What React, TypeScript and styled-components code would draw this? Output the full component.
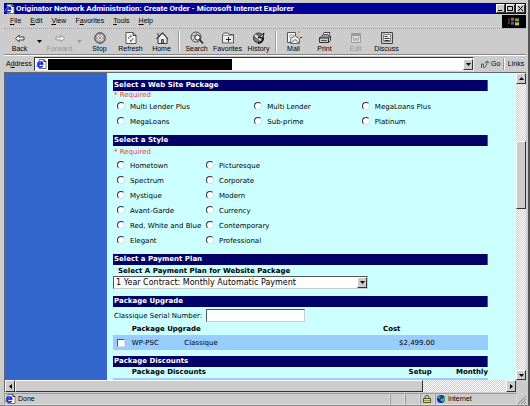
import React from 'react';
import styled, { createGlobalStyle, css } from 'styled-components';

const Global = createGlobalStyle`
  * { box-sizing: border-box; }
  body { margin: 0; background: #cccccc; }
  button, input, select { font: inherit; color: inherit; margin: 0; padding: 0; border-radius: 0; }
  button { background: none; border: 0; }
`;

const ui = '"Liberation Sans", Arial, sans-serif';
const page = '"DejaVu Sans", Verdana, sans-serif';

const raised = css`
  background: #cccccc;
  border: 1px solid;
  border-color: #ffffff #333333 #333333 #ffffff;
`;

const Window = styled.div`
  display: flex;
  flex-direction: column;
  height: 100vh;
  padding: 3px 2px 0 4px;
  background: #cccccc;
  border-right: 2px solid #555555;
  border-bottom: 1px solid #888888;
  font: 7px/10px ${ui};
  color: #000000;
`;

const TitleBar = styled.header`
  display: flex;
  flex: none;
  align-items: center;
  gap: 1px;
  height: 11px;
  padding: 0 1px 0 0;
  background: #000099;
  color: #ffffff;
`;

const Title = styled.h1`
  flex: 1;
  margin: 0;
  font: bold 8px/11px Roboto, ${ui};
  white-space: nowrap;
`;

const WindowButton = styled.button`
  ${raised}
  display: flex;
  width: 9px;
  height: 9px;
  color: #000000;
`;

const WindowButtons = styled.div`
  display: flex;
  gap: 1px;
`;

const MenuBar = styled.nav`
  display: flex;
  flex: none;
  align-items: center;
  gap: 9px;
  height: 15px;
  padding-left: 6px;
  border-bottom: 1px dotted #c08fc0;
`;

const MenuItem = styled.button`
  line-height: 10px;
`;

const Brand = styled.div`
  display: flex;
  justify-content: center;
  align-items: center;
  align-self: stretch;
  width: 24px;
  margin: 1px 0 0 auto;
  background: #000000;
`;

const ToolBar = styled.div`
  display: flex;
  flex: none;
  align-items: center;
  height: 26px;
  border-bottom: 1px solid #888888;
`;

const Tool = styled.button`
  display: flex;
  flex-direction: column;
  align-items: center;
  width: 31px;
  line-height: 8px;
  color: #000000;
  &:disabled { color: #999999; }
`;

const Drop = styled.button`
  display: flex;
  justify-content: center;
  width: 9px;
`;

const Divider = styled.div`
  align-self: stretch;
  width: 2px;
  margin: 2px 1px;
  border-left: 1px solid #999999;
  border-right: 1px solid #ffffff;
`;

const AddressBar = styled.form`
  display: flex;
  flex: none;
  align-items: center;
  height: 17px;
  padding-left: 2px;
  border-top: 1px solid #ffffff;
`;

const AddressLabel = styled.label`
  width: 28px;
`;

const AddressField = styled.div`
  display: flex;
  flex: 1;
  align-items: center;
  height: 14px;
  padding-left: 1px;
  background: #ffffff;
  border: 1px solid #eeeeee;
  border-top-color: #333333;
  border-left-color: #333333;
`;

const AddressInput = styled.input`
  width: 42%;
  height: 11px;
  margin-left: 1px;
  background: #000000;
  border: 0;
  color: #ffffff;
`;

const ArrowButton = styled.button`
  ${raised}
  display: flex;
  flex: none;
  align-items: center;
  justify-content: center;
  width: 10px;
  height: 11px;
`;

const FieldArrow = styled(ArrowButton)`
  margin-left: auto;
`;

const GoButton = styled.button`
  display: flex;
  align-items: center;
  gap: 1px;
  width: 28px;
  padding-left: 6px;
`;

const Links = styled.button`
  width: 20px;
`;

const Body = styled.div`
  display: flex;
  flex: 1;
  min-height: 0;
  border-top: 1px solid #666666;
  border-left: 1px solid #666666;
`;

const SideBar = styled.aside`
  flex: none;
  width: 102px;
  background: #3366cc;
`;

const Content = styled.main`
  flex: 1;
  min-width: 0;
  overflow: hidden;
  padding: 7px 28px 0 6px;
  background: #ccffff;
  font: 7px/10px ${page};
`;

const Heading = styled.h2`
  margin: 0;
  padding-left: 1px;
  background: #000066;
  border-right: 1px solid #336699;
  color: #ffffff;
  font: bold 7px/11px ${page};
`;

const Section = styled.section<{ $space: number }>`
  margin-bottom: ${(p) => p.$space}px;
`;

const Required = styled.p<{ $height: number }>`
  margin: 0;
  padding-left: 1px;
  color: #ff3333;
  line-height: ${(p) => p.$height}px;
`;

const Choices = styled.div<{ $columns: string }>`
  display: grid;
  grid-template-columns: ${(p) => p.$columns};
  grid-auto-rows: 15px;
  padding-left: 4px;
`;

const Choice = styled.label`
  display: flex;
  align-items: center;
  gap: 5px;
  white-space: nowrap;
`;

const Radio = styled.input`
  appearance: none;
  flex: none;
  width: 8px;
  height: 8px;
  margin-bottom: 2px;
  background: #ffffff;
  border: 1px solid #dddddd;
  border-top-color: #333333;
  border-left-color: #333333;
  border-radius: 50%;
  &:checked { background: radial-gradient(#000000 35%, #ffffff 45%); }
`;

const PlanLabel = styled.label`
  display: block;
  padding: 1px 0 0 5px;
  font-weight: bold;
`;

const SelectBox = styled.div`
  position: relative;
  width: 68%;
`;

const Select = styled.select`
  appearance: none;
  display: block;
  width: 100%;
  height: 13px;
  padding-left: 2px;
  background: #ffffff;
  border: 1px solid #cccccc;
  border-top-color: #555555;
  border-left-color: #555555;
  font: 8px/11px ${page};
`;

const SelectArrow = styled.span`
  ${raised}
  position: absolute;
  top: 1px;
  right: 1px;
  bottom: 1px;
  display: flex;
  align-items: center;
  justify-content: center;
  width: 10px;
  pointer-events: none;
`;

const SerialRow = styled.div`
  display: flex;
  align-items: center;
  gap: 4px;
  padding: 2px 0 2px 1px;
`;

const SerialInput = styled.input`
  width: 99px;
  height: 13px;
  background: #ffffff;
  border: 1px solid #cccccc;
  border-top-color: #555555;
  border-left-color: #555555;
`;

const Table = styled.table`
  width: 100%;
  border-collapse: collapse;
  table-layout: fixed;
`;

const Col = styled.col<{ $width?: string }>`
  width: ${(p) => p.$width ?? 'auto'};
`;

const Head = styled.th<{ $right?: boolean }>`
  padding: 0;
  text-align: ${(p) => (p.$right ? 'right' : 'left')};
  line-height: 11px;
`;

const Cell = styled.td<{ $indent?: number }>`
  height: 15px;
  padding: 0 0 0 ${(p) => p.$indent ?? 0}px;
  background: #99ccff;
`;

const Check = styled.input`
  appearance: none;
  display: block;
  width: 8px;
  height: 8px;
  background: #ffffff;
  border: 1px solid #dddddd;
  border-top-color: #555555;
  border-left-color: #555555;
  &:checked { background: #000000; }
`;

const track = css`
  background: repeating-conic-gradient(#ffffff 0 25%, #d8c8d8 0 50%) 0 0 / 2px 2px;
`;

const VScroll = styled.div`
  ${track}
  display: grid;
  flex: none;
  grid-template-rows: 11px 57fr 68fr 162fr 10px;
  width: 10px;
`;

const HScroll = styled.div`
  ${track}
  display: grid;
  flex: none;
  grid-template-columns: 10px 409fr 83fr 10px 10px;
  height: 12px;
  border-left: 1px solid #666666;
`;

const Thumb = styled.div`
  ${raised}
`;

const ScrollButton = styled(ArrowButton)`
  width: auto;
  height: auto;
`;

const Corner = styled.div`
  background: #cccccc;
`;

const StatusBar = styled.footer`
  display: flex;
  flex: none;
  align-items: stretch;
  height: 13px;
  padding-top: 1px;
`;

const Status = styled.div<{ $width?: number }>`
  display: flex;
  align-items: center;
  gap: 2px;
  flex: ${(p) => (p.$width ? 'none' : '1')};
  width: ${(p) => (p.$width ? `${p.$width}px` : 'auto')};
  border: 1px solid #dddddd;
  border-top-color: #999999;
  border-left-color: #999999;
`;

const Arrow = ({ dir = 'down', color = '#000' }: { dir?: 'up' | 'down' | 'left' | 'right'; color?: string }) => {
  const d = {
    down: 'M0 1h5L2.500 4z',
    up: 'M0 4h5L2.500 1z',
    left: 'M4 0v5L1 2.500z',
    right: 'M1 0v5L4 2.500z',
  }[dir];
  return <svg width="5" height="5" viewBox="0 0 5 5" aria-hidden="true"><path d={d} fill={color} /></svg>;
};

const PageIcon = () => (
  <svg width="11" height="10" viewBox="0 0 11 10" aria-hidden="true">
    <path d="M3 .5h5l2 2v7H3z" fill="#fff" stroke="#777" />
    <path d="M8 .5v2h2" fill="none" stroke="#333" />
    <path d="M6.500 6.800A2.600 2.600 0 1 1 6.800 5H2.200" fill="none" stroke="#0808d8" strokeWidth="1.500" />
    <path d="M.8 8C1 5 4 2 8 2" fill="none" stroke="#3388ee" />
  </svg>
);

const icons: Record<string, React.ReactNode> = {
  Back: <path d="M3.500 7.500 7 4v2h5v3H7v2z" fill="#eee" stroke="#444" />,
  Forward: <path d="M12.500 7.500 9 4v2H4v3h5v2z" fill="#eee" stroke="#999" />,
  Stop: (
    <>
      <circle cx="8" cy="7" r="5.300" fill="#aaa0a8" stroke="#444" />
      <path d="m5.500 4.500 5 5m0-5-5 5" stroke="#fff" strokeWidth="2" />
      <path d="m5.500 4.500 5 5m0-5-5 5" stroke="#755" strokeWidth=".7" />
    </>
  ),
  Refresh: (
    <>
      <path d="M3 1.500h7l3 3v8H3z" fill="#fff" stroke="#555" />
      <path d="M10 1.500v3h3" fill="none" stroke="#333" />
      <path d="M5.500 8V6.500L8 5m-1-1 1.500 1L7.500 6.500M10 7v1.500L7.500 10m1 1L7 10l1-1.500" fill="none" stroke="#666" />
    </>
  ),
  Home: (
    <>
      <path d="M4 7v5.500h9V7L8.500 2z" fill="#eee" stroke="#333" />
      <path d="M2 8 8.500 1.500 14 8M4 5V2" fill="none" stroke="#333" />
      <path d="M7.500 12V8.500h2V12" fill="#999" stroke="#444" />
    </>
  ),
  Search: (
    <>
      <circle cx="7" cy="6" r="5" fill="#ddd" stroke="#444" />
      <path d="M3 5c3-2 3 1 5-3M4 9c2-2 2-3 1-4" fill="none" stroke="#777" />
      <circle cx="8.500" cy="6.500" r="2.600" fill="#fff" stroke="#222" />
      <path d="m10.500 8.500 3.500 4" stroke="#222" strokeWidth="1.600" />
    </>
  ),
  Favorites: (
    <>
      <path d="M2.500 12V3.500L4 2h4l1 1.500h4.500V12z" fill="#eee" stroke="#555" />
      <path d="M3 4.500h10" stroke="#999" />
      <path d="M8.500 6v5M6 8.500h5" stroke="#222" />
    </>
  ),
  History: (
    <>
      <circle cx="7.500" cy="7" r="5" fill="#777" stroke="#333" />
      <path d="M7 7 4 4m3 3 4 3" stroke="#fff" strokeWidth="1.500" />
      <path d="m7 7 6-5-1 4z" fill="#fff" stroke="#111" />
      <path d="M12 7a5 5 0 0 1-5 5" fill="none" stroke="#111" strokeWidth="2" />
    </>
  ),
  Mail: (
    <>
      <path d="M1.500 1.500h8v10h-8z" fill="#fff" stroke="#555" />
      <path d="M3 4h5M3 6h3" stroke="#999" />
      <path d="M4.500 12.500V8L9 4.500 13.500 8v4.500zM5 12l4-3.500L13 12" fill="#eee" stroke="#666" />
      <path d="M12 1h2" stroke="#e64" />
      <path d="M14 6h2v1h-2z" fill="#333" />
    </>
  ),
  Print: (
    <>
      <path d="m5 6 2-4.500h6L11 6z" fill="#fff" stroke="#444" />
      <path d="m2.500 7 2-2h9l-2 2z" fill="#ddd" stroke="#444" />
      <path d="M2.500 7h9v4.500h-9zM11.500 11.500l2-2V5l-2 2z" fill="#ccc" stroke="#333" />
      <path d="M4 9.500h6M7 3.500h4" stroke="#555" />
    </>
  ),
  Edit: (
    <>
      <path d="M3.500 2.500h9v9h-9z" fill="#ddd" stroke="#999" />
      <path d="M3 4h10" stroke="#999" strokeWidth="2" />
      <path d="m5 6 1.500 4L8 7l1.500 3L11 6" fill="none" stroke="#999" />
    </>
  ),
  Discuss: (
    <>
      <path d="M2.500 1.500h11v11h-11z" fill="#ccc" stroke="#444" />
      <path d="M4.500 3.500h7v7h-7z" fill="#eee" stroke="#888" />
      <path d="M5.500 5.500h3M5.500 7.500h5M5.500 9.500h5" stroke="#333" />
    </>
  ),
};

const ToolButton = ({ name, disabled }: { name: string; disabled?: boolean }) => (
  <Tool type="button" disabled={disabled}>
    <svg width="16" height="14" viewBox="0 0 16 14" aria-hidden="true">{icons[name]}</svg>
    {name}
  </Tool>
);

const menus: [string, string, string][] = [
  ['', 'F', 'ile'], ['', 'E', 'dit'], ['', 'V', 'iew'], ['F', 'a', 'vorites'], ['', 'T', 'ools'], ['', 'H', 'elp'],
];

const packages = ['Multi Lender Plus', 'Multi Lender', 'MegaLoans Plus', 'MegaLoans', 'Sub-prime', 'Platinum'];

const styles = [
  'Hometown', 'Picturesque', 'Spectrum', 'Corporate', 'Mystique', 'Modern', 'Avant-Garde', 'Currency',
  'Red, White and Blue', 'Contemporary', 'Elegant', 'Professional',
];

const RadioGroup = ({ name, items, columns }: { name: string; items: string[]; columns: string }) => (
  <Choices $columns={columns} role="radiogroup">
    {items.map((item) => (
      <Choice key={item}>
        <Radio type="radio" name={name} value={item} />
        {item}
      </Choice>
    ))}
  </Choices>
);

export default function App() {
  return (
    <>
      <Global />
      <Window>
        <TitleBar>
          <PageIcon />
          <Title>Originator Network Administration: Create Order - Microsoft Internet Explorer</Title>
          <WindowButtons>
            <WindowButton aria-label="Minimize">
              <svg width="7" height="7"><path d="M1 5.500h4" stroke="#000" /></svg>
            </WindowButton>
            <WindowButton aria-label="Maximize">
              <svg width="7" height="7"><path d="M.5 1.500h5v4h-5z" fill="none" stroke="#000" /></svg>
            </WindowButton>
            <WindowButton aria-label="Close">
              <svg width="7" height="7"><path d="m1 1 5 5m0-5L1 6" stroke="#000" /></svg>
            </WindowButton>
          </WindowButtons>
        </TitleBar>
        <MenuBar>
          {menus.map(([before, key, after]) => (
            <MenuItem key={before + key + after} type="button">{before}<u>{key}</u>{after}</MenuItem>
          ))}
          <Brand>
            <svg width="12" height="11" viewBox="0 0 12 11" aria-hidden="true">
              <path d="M3 2q2-1 3 0v3q-1-1-3 0z" fill="#c53" />
              <path d="M7 2q1 1 4 0v3q-3 1-4 0z" fill="#5a5" />
              <path d="M3 6q2-1 3 0v3q-1-1-3 0z" fill="#36c" />
              <path d="M7 6q1 1 4 0v3q-3 1-4 0z" fill="#cb4" />
              <path d="M0 3h2M0 5h2M0 7h2" stroke="#955" />
            </svg>
          </Brand>
        </MenuBar>
        <ToolBar>
          <ToolButton name="Back" />
          <Drop type="button" aria-label="Back history"><Arrow /></Drop>
          <ToolButton name="Forward" disabled />
          <Drop type="button" aria-label="Forward history"><Arrow color="#999" /></Drop>
          <ToolButton name="Stop" />
          <ToolButton name="Refresh" />
          <ToolButton name="Home" />
          <Divider />
          <ToolButton name="Search" />
          <ToolButton name="Favorites" />
          <ToolButton name="History" />
          <Divider />
          <ToolButton name="Mail" />
          <ToolButton name="Print" />
          <ToolButton name="Edit" disabled />
          <ToolButton name="Discuss" />
        </ToolBar>
        <AddressBar onSubmit={(e) => e.preventDefault()}>
          <AddressLabel htmlFor="address">A<u>d</u>dress</AddressLabel>
          <AddressField>
            <PageIcon />
            <AddressInput id="address" />
            <FieldArrow type="button" aria-label="Show addresses"><Arrow /></FieldArrow>
          </AddressField>
          <GoButton type="submit">
            <svg width="10" height="10" viewBox="0 0 10 10" aria-hidden="true">
              <path d="M1.500 9V5h2v3.500M4 9C6 8 7 6 7 3M5 4l2-2 2.500 2" fill="none" stroke="#555" />
            </svg>
            Go
          </GoButton>
          <Divider />
          <Links type="button">Links</Links>
        </AddressBar>
        <Body>
          <SideBar />
          <Content>
            <Section $space={6}>
              <Heading>Select a Web Site Package</Heading>
              <Required $height={8}>* Required</Required>
              <RadioGroup name="package" items={packages} columns="37% 29% 1fr" />
            </Section>
            <Section $space={6}>
              <Heading>Select a Style</Heading>
              <Required $height={12}>* Required</Required>
              <RadioGroup name="style" items={styles} columns="24% 1fr" />
            </Section>
            <Section $space={7}>
              <Heading>Select a Payment Plan</Heading>
              <PlanLabel htmlFor="plan">Select A Payment Plan for Website Package</PlanLabel>
              <SelectBox>
                <Select id="plan">
                  <option>1 Year Contract: Monthly Automatic Payment</option>
                </Select>
                <SelectArrow><Arrow /></SelectArrow>
              </SelectBox>
            </Section>
            <Section $space={6}>
              <Heading>Package Upgrade</Heading>
              <SerialRow>
                <label htmlFor="serial">Classique Serial Number:</label>
                <SerialInput id="serial" />
              </SerialRow>
              <Table>
                <colgroup><Col $width="5%" /><Col $width="14%" /><Col /><Col $width="28%" /></colgroup>
                <thead>
                  <tr><Head /><Head colSpan={2}>Package Upgrade</Head><Head>Cost</Head></tr>
                </thead>
                <tbody>
                  <tr>
                    <Cell $indent={4}><Check type="checkbox" aria-label="WP-PSC Classique" /></Cell>
                    <Cell>WP-PSC</Cell>
                    <Cell>Classique</Cell>
                    <Cell $indent={16}>$2,499.00</Cell>
                  </tr>
                </tbody>
              </Table>
            </Section>
            <Section $space={0}>
              <Heading>Package Discounts</Heading>
              <Table>
                <colgroup><Col $width="5%" /><Col /><Col $width="20%" /><Col $width="15%" /></colgroup>
                <thead>
                  <tr><Head /><Head>Package Discounts</Head><Head $right>Setup</Head><Head $right>Monthly</Head></tr>
                </thead>
                <tbody>
                  <tr><Cell colSpan={4} /></tr>
                </tbody>
              </Table>
            </Section>
          </Content>
          <VScroll>
            <ScrollButton aria-label="Scroll up"><Arrow dir="up" /></ScrollButton>
            <span />
            <Thumb />
            <span />
            <ScrollButton aria-label="Scroll down"><Arrow /></ScrollButton>
          </VScroll>
        </Body>
        <HScroll>
          <ScrollButton aria-label="Scroll left"><Arrow dir="left" /></ScrollButton>
          <Thumb />
          <span />
          <ScrollButton aria-label="Scroll right"><Arrow dir="right" /></ScrollButton>
          <Corner />
        </HScroll>
        <StatusBar>
          <Status><PageIcon />Done</Status>
          <Status $width={15} />
          <Status $width={15} />
          <Status $width={15}>
            <svg width="12" height="10" viewBox="0 0 10 10" aria-hidden="true">
              <path d="M3 5V2.500Q5-.5 7 2.500V5" fill="none" stroke="#554" />
              <path d="M1.500 4.500h7v4h-7z" fill="#ee2" stroke="#552" />
              <path d="M2 6.500h6" stroke="#993" />
            </svg>
          </Status>
          <Status $width={82}>
            <svg width="10" height="10" viewBox="0 0 10 10" aria-hidden="true">
              <circle cx="5" cy="5" r="4" fill="#12b" />
              <path d="M1 4q2-3 4-2L4 5zM6 4l3-1v4L6 8z" fill="#3a6" />
              <path d="m4 6 2-1v2z" fill="#9df" />
            </svg>
            Internet
          </Status>
          <svg width="9" height="12" viewBox="0 0 9 12" aria-hidden="true">
            <path d="m1 11 8-8M4 11l5-5M7 11l2-2" stroke="#888" />
          </svg>
        </StatusBar>
      </Window>
    </>
  );
}
